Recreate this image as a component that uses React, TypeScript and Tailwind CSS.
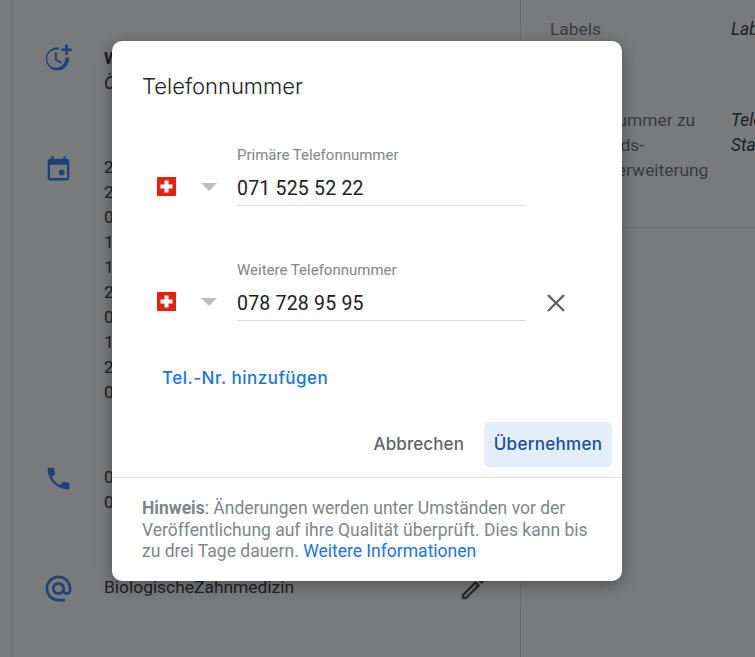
const roboto = "font-['Roboto',sans-serif]";

function Icon({ size, d, className }: { size: number; d: string; className?: string }) {
  return (
    <svg width={size} height={size} viewBox="0 0 24 24" fill="currentColor" className={className}>
      <path d={d} />
    </svg>
  );
}

function SwissFlag() {
  return (
    <svg width="19" height="19" viewBox="0 0 19 19" className="mb-[10px] shrink-0">
      <rect width="19" height="19" fill="#e3220f" />
      <path d="M7.5 3.5h4v4h4v4h-4v4h-4v-4h-4v-4h4z" fill="#fff" />
    </svg>
  );
}

function Caret() {
  return (
    <svg width="16" height="8" viewBox="0 0 16 8" className="ml-[25px] mb-[15px] shrink-0">
      <path d="M0 0h16l-8 8z" fill="#bdbdbd" />
    </svg>
  );
}

function PhoneRow({ label, value, removable }: { label: string; value: string; removable?: boolean }) {
  return (
    <div className="flex items-end pl-[45px]">
      <SwissFlag />
      <Caret />
      <div className="ml-[20px] w-[289px] border-b border-[#dadce0]">
        <div className="h-[21px] text-[15px] leading-[20px] text-[#80868b]">{label}</div>
        <div className="mt-[10px] h-[29px] text-[19.5px] leading-[26px] tracking-[0.2px] text-[#202124]">{value}</div>
      </div>
      {removable && (
        <svg width="20" height="20" viewBox="0 0 20 20" className="ml-[20px] mb-[8px] shrink-0">
          <path d="M2 2l16 16M18 2L2 18" stroke="#5f6368" strokeWidth="2.4" fill="none" />
        </svg>
      )}
    </div>
  );
}

function BackgroundRow({ icon, lines, className, action }: { icon: React.ReactNode; lines: React.ReactNode[]; className?: string; action?: React.ReactNode }) {
  return (
    <div className={`flex ${className || ""}`}>
      <div className="flex w-[91px] shrink-0 justify-center text-[#1a73e8]">{icon}</div>
      <div className="text-[17.4px] leading-[25px] text-[#202124]">
        {lines.map((line, i) => (
          <div key={i}>{line}</div>
        ))}
      </div>
      {action}
    </div>
  );
}

export default function App() {
  return (
    <div className={`relative h-[657px] w-[755px] overflow-hidden bg-white ${roboto}`}>
      {/* page behind the dialog */}
      <div className="ml-3 flex h-full border-l border-[#dadce0]">
        <div className="w-[508px] shrink-0 border-r border-[#dadce0] pt-[46px]">
          <BackgroundRow
            icon={<Icon size={31} className="-mt-[4px] -ml-[3px]" d="M10 8v6l4.7 2.9.8-1.2-4-2.4V8z M17.92 12c.05.33.08.66.08 1 0 3.9-3.1 7-7 7s-7-3.1-7-7 3.1-7 7-7c.7 0 1.37.1 2 .29V4.23C13.36 4.08 12.69 4 12 4c-5 0-9 4-9 9s4 9 9 9 9-4 9-9c0-.34-.02-.67-.06-1h-3.02z M20 5V2h-2v3h-3v2h3v3h2V7h3V5z" />}
            lines={[<span className="font-bold">W</span>, <span className="italic">Ö</span>]}
          />
          <BackgroundRow
            className="mt-[59px]"
            icon={
              <svg width="29" height="29" viewBox="0 0 24 24" fill="currentColor" className="-ml-[1px]">
                <path d="M16 1v2H8V1H6v2H5c-1.1 0-2 .9-2 2v14c0 1.1.9 2 2 2h14c1.1 0 2-.9 2-2V5c0-1.1-.9-2-2-2h-1V1h-2zm3 18H5V8h14v11z" />
                <circle cx="14.6" cy="14.5" r="2.4" />
              </svg>
            }
            lines={["2", "2", "0", "1", "1", "2", "0", "1", "2", "0"]}
          />
          <BackgroundRow
            className="mt-[60px]"
            icon={<Icon size={29} className="-mt-[1px] -ml-[1px]" d="M6.62 10.79c1.44 2.83 3.76 5.14 6.59 6.59l2.2-2.2c.27-.27.67-.36 1.02-.24 1.12.37 2.33.57 3.57.57.55 0 1 .45 1 1V20c0 .55-.45 1-1 1-9.39 0-17-7.61-17-17 0-.55.45-1 1-1h3.5c.55 0 1 .45 1 1 0 1.25.2 2.45.57 3.57.11.35.03.74-.25 1.02l-2.2 2.2z" />}
            lines={["0", "0"]}
          />
          <BackgroundRow
            className="mt-[60px]"
            icon={<Icon size={31} className="-mt-[2px]" d="M12 2C6.48 2 2 6.48 2 12s4.48 10 10 10h5v-2h-5c-4.34 0-8-3.66-8-8s3.66-8 8-8 8 3.66 8 8v1.43c0 .79-.71 1.57-1.5 1.57s-1.5-.78-1.5-1.57V12c0-2.76-2.24-5-5-5s-5 2.24-5 5 2.24 5 5 5c1.38 0 2.64-.56 3.54-1.47.65.89 1.77 1.47 2.96 1.47 1.97 0 3.5-1.6 3.5-3.57V12c0-5.52-4.48-10-10-10zm0 13c-1.66 0-3-1.34-3-3s1.34-3 3-3 3 1.34 3 3-1.34 3-3 3z" />}
            lines={["BiologischeZahnmedizin"]}
            action={
              <div className="ml-auto pr-[32px] text-[#3c4043]">
                <Icon size={30} className="-mt-[2px]" d="M14.06 9.02l.92.92L5.92 19H5v-.92l9.06-9.06M17.66 3c-.25 0-.51.1-.7.29l-1.83 1.83 3.75 3.75 1.83-1.83c.39-.39.39-1.02 0-1.41l-2.34-2.34c-.2-.2-.45-.29-.71-.29zm-3.6 3.19L3 17.25V21h3.75L17.81 9.94l-3.75-3.75z" />
              </div>
            }
          />
        </div>
        <div className="min-w-0 flex-1 overflow-hidden">
          <div className="h-[228px] border-b border-[#dadce0] pl-[29px] pt-[17px] text-[17.4px] leading-[25px]">
            <div className="flex">
              <div className="w-[181px] shrink-0 text-[#5f6368]">Labels</div>
              <div className="italic text-[#202124]">Labels</div>
            </div>
            <div className="mt-[66px] flex">
              <div className="w-[181px] shrink-0 text-[#5f6368]">
                Telefonnummer zu
                <br />
                Google Ads-
                <br />
                Standorterweiterung
              </div>
              <div className="whitespace-nowrap italic text-[#202124]">
                Telefon
                <br />
                Standard
              </div>
            </div>
          </div>
        </div>
      </div>

      {/* dialog overlay */}
      <div className="absolute inset-0 bg-[#202124]/60 pl-[112px] pt-[41px]">
        <div className="w-[510px] rounded-[10px] bg-white shadow-[0_4px_16px_rgba(0,0,0,0.35)]">
          <h2 className="h-[61px] pl-[30px] pt-[30px] font-['Inter',sans-serif] text-[22px] font-light leading-[30px] text-[#202124]">
            Telefonnummer
          </h2>
          <div className="mt-[43px] flex flex-col gap-[54px]">
            <PhoneRow label="Primäre Telefonnummer" value="071 525 52 22" />
            <PhoneRow label="Weitere Telefonnummer" value="078 728 95 95" removable />
          </div>
          <div className="mt-[45px] pl-[50px] font-['Inter',sans-serif] text-[17px] font-medium leading-[24px] tracking-[0.5px] text-[#1a73e8]">
            Tel.-Nr. hinzufügen
          </div>
          <div className="mt-[32px] flex items-center justify-end pr-[10px] font-['Inter',sans-serif] text-[17px] font-medium">
            <button className="mr-[10px] h-[45px] px-[10px] tracking-[0.1px] text-[#5f6368]">Abbrechen</button>
            <button className="h-[45px] w-[128px] rounded-md bg-[#e3eefa] tracking-[0.3px] text-[#174ea6]">Übernehmen</button>
          </div>
          <div className="mt-[10px] border-t border-[#dadce0] px-[30px] pb-[18px] pt-[20px] text-[17.5px] leading-[21.5px] text-[#80868b]">
            <span className="font-bold">Hinweis</span>: Änderungen werden unter Umständen vor der Veröffentlichung auf ihre Qualität überprüft. Dies kann bis zu drei Tage dauern.{" "}
            <span className="text-[#1a73e8]">Weitere Informationen</span>
          </div>
        </div>
      </div>
    </div>
  );
}
